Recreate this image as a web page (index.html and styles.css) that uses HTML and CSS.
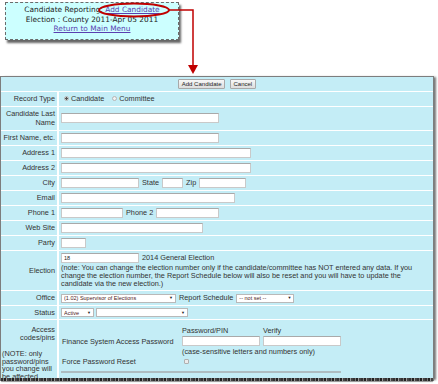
FILE: index.html
```html
<!DOCTYPE html>
<html lang="en">
<head>
    <meta charset="UTF-8">
    <title>Add Candidate</title>
    <link rel="stylesheet" href="styles.css">
</head>
<body>
    <!-- callout with the menu header -->
    <div class="callout">
        <div>Candidate Reporting: <a href="#" class="nav-link">Add Candidate</a></div>
        <div>Election : County 2011-Apr 05 2011</div>
        <div><a href="#" class="nav-link">Return to Main Menu</a></div>
    </div>

    <svg class="pointer" width="200" height="76" viewBox="0 0 200 76">
        <ellipse cx="134" cy="10" rx="35" ry="6.5" fill="none" stroke="#c00000" stroke-width="2"/>
        <polyline points="169,10 193,10 193,66" fill="none" stroke="#c00000" stroke-width="1.5"/>
        <polygon points="188,65 198,65 193,74" fill="#c00000"/>
    </svg>

    <!-- candidate form -->
    <div class="panel">
        <div class="form-wrap">
            <table class="form-table">
                <tr>
                    <td colspan="2" class="toolbar">
                        <button class="btn">Add Candidate</button>
                        <button class="btn">Cancel</button>
                    </td>
                </tr>
                <tr>
                    <td class="lbl">Record Type</td>
                    <td class="fld">
                        <div class="line">
                            <label class="opt"><input type="radio" name="rtype" checked> Candidate</label>
                            <label class="opt"><input type="radio" name="rtype"> Committee</label>
                        </div>
                    </td>
                </tr>
                <tr>
                    <td class="lbl">Candidate Last Name</td>
                    <td class="fld"><input class="txt w-name" type="text"></td>
                </tr>
                <tr>
                    <td class="lbl">First Name, etc.</td>
                    <td class="fld"><input class="txt w-name" type="text"></td>
                </tr>
                <tr>
                    <td class="lbl">Address 1</td>
                    <td class="fld"><input class="txt w-addr" type="text"></td>
                </tr>
                <tr>
                    <td class="lbl">Address 2</td>
                    <td class="fld"><input class="txt w-addr" type="text"></td>
                </tr>
                <tr>
                    <td class="lbl">City</td>
                    <td class="fld">
                        <div class="line">
                            <input class="txt w-city" type="text">
                            <span>State</span>
                            <input class="txt w-state" type="text">
                            <span>Zip</span>
                            <input class="txt w-zip" type="text">
                        </div>
                    </td>
                </tr>
                <tr>
                    <td class="lbl">Email</td>
                    <td class="fld"><input class="txt w-email" type="text"></td>
                </tr>
                <tr>
                    <td class="lbl">Phone 1</td>
                    <td class="fld">
                        <div class="line">
                            <input class="txt w-phone" type="text">
                            <span>Phone 2</span>
                            <input class="txt w-phone2" type="text">
                        </div>
                    </td>
                </tr>
                <tr>
                    <td class="lbl">Web Site</td>
                    <td class="fld"><input class="txt w-web" type="text"></td>
                </tr>
                <tr>
                    <td class="lbl">Party</td>
                    <td class="fld"><input class="txt w-party" type="text"></td>
                </tr>
                <tr>
                    <td class="lbl">Election</td>
                    <td class="fld">
                        <div class="line">
                            <input class="txt w-city" type="text" value="18">
                            <span>2014 General Election</span>
                        </div>
                        <p class="note">(note: You can change the election number only if the candidate/committee has NOT entered any data. If you change the election number, the Report Schedule below will also be reset and you will have to update the candidate via the new election.)</p>
                    </td>
                </tr>
                <tr>
                    <td class="lbl">Office</td>
                    <td class="fld">
                        <div class="line">
                            <span class="sel w-office"><select><option>(1.02) Supervisor of Elections</option></select></span>
                            <span>Report Schedule</span>
                            <span class="sel w-sched"><select><option>-- not set --</option></select></span>
                        </div>
                    </td>
                </tr>
                <tr>
                    <td class="lbl">Status</td>
                    <td class="fld">
                        <div class="line tight">
                            <span class="sel w-status"><select><option>Active</option></select></span>
                            <span class="sel w-status2"><select><option></option></select></span>
                        </div>
                    </td>
                </tr>
                <tr>
                    <td class="lbl access">
                        <div class="access-title">Access codes/pins</div>
                        <div class="access-note">(NOTE: only password/pins you change will be affected</div>
                    </td>
                    <td class="fld access">
                        <table class="pin-table">
                            <tr class="pin-head">
                                <td class="pin-name"></td>
                                <td>Password/PIN</td>
                                <td>Verify</td>
                            </tr>
                            <tr class="pin-inputs">
                                <td class="pin-name">Finance System Access Password</td>
                                <td><input class="txt w-pin" type="password"></td>
                                <td><input class="txt w-pin" type="password"></td>
                            </tr>
                            <tr>
                                <td class="pin-name"></td>
                                <td colspan="2">(case-sensitive letters and numbers only)</td>
                            </tr>
                            <tr class="pin-reset">
                                <td class="pin-name">Force Password Reset</td>
                                <td><input class="chk" type="checkbox"></td>
                                <td></td>
                            </tr>
                            <tr>
                                <td colspan="3" class="pin-rule"><div></div></td>
                            </tr>
                        </table>
                    </td>
                </tr>
            </table>
        </div>
        <div class="torn-edge"></div>
    </div>
</body>
</html>
```

FILE: styles.css
```css
* {
    margin: 0;
    padding: 0;
    box-sizing: border-box;
}

body {
    position: relative;
    width: 438px;
    height: 384px;
    overflow: hidden;
    background-color: #fff;
    font-family: "Liberation Sans", Arial, sans-serif;
    color: #333;
}

/* header callout */
.callout {
    width: 174px;
    height: 38px;
    margin: 2px 0 0 5px;
    padding-top: 2px;
    background-color: #ccffff;
    border: 1px dashed #6b6b6b;
    box-shadow: 2px 3px 2px rgba(0, 0, 0, 0.6);
    font-family: "DejaVu Sans", Verdana, sans-serif;
    font-size: 7.4px;
    line-height: 9.5px;
    text-align: center;
    color: #222;
}

.nav-link {
    color: #5a3fb0;
    text-decoration: underline;
}

.pointer {
    position: absolute;
    left: 0;
    top: 0;
}

/* form panel */
.panel {
    display: flex;
    flex-direction: column;
    width: 434px;
    height: 305px;
    margin-top: 36px;
    background-color: #c4edf6;
    border: 1px solid #7d7d7d;
    border-bottom: none;
    box-shadow: 3px 0 2px -1px #777;
}

.form-wrap {
    flex: 1;
    overflow: hidden;
}

.torn-edge {
    height: 3px;
    background: repeating-linear-gradient(90deg, #333 0 2px, #777 2px 3px, #222 3px 5px, #999 5px 6px, #444 6px 8px);
    box-shadow: 0 1px 1px rgba(0, 0, 0, 0.4);
}

.form-table {
    width: 100%;
    border-collapse: separate;
    border-spacing: 0;
    font-size: 7.3px;
    line-height: 9.5px;
}

.toolbar {
    padding: 2px;
    text-align: center;
    border-bottom: 1px solid #fff;
}

.btn {
    height: 10px;
    padding: 0 3px;
    margin: 0 1px;
    border: 1px solid #a8a8a8;
    border-radius: 1px;
    background: linear-gradient(#f7f7f7, #dddddd);
    font-family: "Liberation Sans", Arial, sans-serif;
    font-size: 6px;
    color: #222;
    vertical-align: middle;
}

.lbl {
    width: 58px;
    padding: 2px 2px 2px 1px;
    text-align: right;
    vertical-align: middle;
    border-right: 2px solid #fff;
    border-bottom: 1px solid #fff;
}

.fld {
    padding: 2px;
    vertical-align: middle;
    border-bottom: 1px solid #fff;
}

.line {
    display: flex;
    align-items: center;
    gap: 3px;
    white-space: nowrap;
}

.line.tight {
    gap: 2px;
}

.opt {
    display: flex;
    align-items: center;
    gap: 1px;
    margin-right: 2px;
}

.opt input {
    appearance: none;
    width: 5px;
    height: 5px;
    margin: 0 1px 0 3px;
    border: 1px solid #b5b5b5;
    border-radius: 50%;
    background-color: #f2f2f2;
}

.opt input:checked {
    background: radial-gradient(circle, #555 0 1px, #f2f2f2 1.5px);
}

.txt {
    display: block;
    height: 10px;
    padding: 0 2px;
    border: 1px solid #c9c9c9;
    border-top-color: #a9a9a9;
    background-color: #fff;
    font-family: "Liberation Sans", Arial, sans-serif;
    font-size: 5.5px;
    color: #222;
}

.w-name { width: 158px; }
.w-addr { width: 190px; }
.w-city { width: 78px; }
.w-state { width: 21px; }
.w-zip { width: 47px; }
.w-email { width: 174px; }
.w-phone { width: 62px; }
.w-phone2 { width: 63px; }
.w-web { width: 142px; }
.w-party { width: 25px; }
.w-pin { width: 78px; }

.note {
    margin-top: 1px;
    line-height: 8.2px;
}

/* drop-downs */
.sel {
    position: relative;
    display: block;
    height: 9px;
}

.sel select {
    appearance: none;
    width: 100%;
    height: 100%;
    padding: 0 2px;
    border: 1px solid #b9b9b9;
    background-color: #fff;
    font-family: "Liberation Sans", Arial, sans-serif;
    font-size: 5.5px;
    color: #4a2222;
}

.sel::after {
    content: "\25BC";
    position: absolute;
    right: 3px;
    top: 2px;
    font-size: 4px;
    line-height: 5px;
    color: #222;
}

.w-office { width: 115px; }
.w-sched { width: 58px; }
.w-status { width: 33px; }
.w-status2 { width: 92px; }

/* access codes */
.lbl.access,
.fld.access {
    vertical-align: top;
}

.lbl.access {
    padding-top: 6px;
}

.access-title {
    line-height: 7.5px;
}

.access-note {
    margin-top: 9px;
    text-align: left;
    line-height: 7.5px;
}

.fld.access {
    padding: 4px 2px 0;
}

.pin-table {
    border-collapse: collapse;
    font-size: 7.3px;
    line-height: 9px;
}

.pin-table td {
    padding: 0;
    vertical-align: middle;
}

.pin-name {
    width: 121px;
    padding-left: 1px !important;
}

.pin-head td {
    padding-top: 2px;
}

.pin-inputs td {
    padding: 1px 3px 1px 0;
}

.pin-reset td {
    height: 10px;
}

.chk {
    appearance: none;
    display: block;
    width: 5px;
    height: 5px;
    margin-left: 2px;
    border: 1px solid #b0b0b0;
    border-radius: 1px;
    background-color: #ececec;
}

.pin-rule {
    padding-top: 5px !important;
}

.pin-rule div {
    width: 280px;
    height: 2px;
    background-color: #aebdc1;
}
```
